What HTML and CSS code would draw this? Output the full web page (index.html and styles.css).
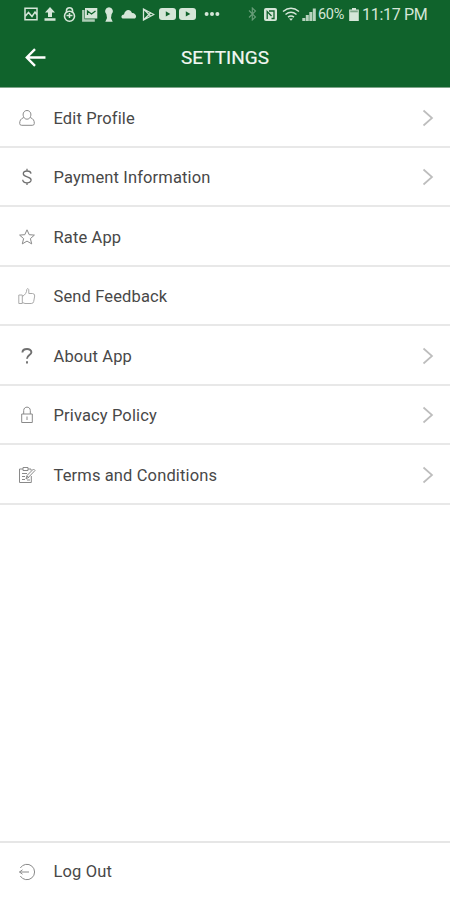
FILE: index.html
```html
<!DOCTYPE html>
<html lang="en">
<head>
<meta charset="utf-8">
<title>Settings</title>
<link rel="stylesheet" href="styles.css">
</head>
<body>
<div class="screen">
  <header class="top">
    <div class="status">
      <svg class="s-image" width="14" height="14" viewBox="0 0 14 14"><path d="M1 1.200h12v11.600H1zM1 9.500l3.500-4 3.500 4 3-4.500 2 3" fill="none" stroke="currentColor" stroke-width="1.500"/></svg>
      <svg class="s-upload" width="12" height="14" viewBox="0 0 12 14"><path d="M6 0l5 5.500H8V10H4V5.500H1zM.5 11.300h11v2.400H.5z" fill="currentColor"/></svg>
      <svg class="s-lock" width="13" height="15" viewBox="0 0 13 15"><g fill="none" stroke="currentColor" stroke-width="1.600"><path d="M3.500 6V3.500a3 2.700 0 0 1 6 0V6"/><circle cx="6.500" cy="9.200" r="5"/></g><path d="M3.500 8.500h6M6.500 6v5" stroke="currentColor" stroke-width="1.500"/></svg>
      <svg class="s-stack" width="17" height="15" viewBox="0 0 17 15"><path d="M4 1h12.300v10.500H4z" fill="currentColor"/><path d="M2.300 3v10.500h11.500" fill="none" stroke="currentColor" stroke-width="2.400" opacity=".8"/><path d="M6.500 8V4l4 3 4-3" fill="none" stroke="#10632c" stroke-width="1.300"/></svg>
      <svg class="s-key" width="10" height="15" viewBox="0 0 10 15"><path d="M5 .3a4 4 0 0 1 2.600 7L7 11l1.700 3.700H1.300L3 11l-.6-3.700A4 4 0 0 1 5 .3z" fill="currentColor"/></svg>
      <svg class="s-cloud" width="16" height="10" viewBox="0 0 16 10"><path d="M2.500 9.500C-.5 9.500-.2 5.500 3 5.500 4 0 9.500-.5 11 4c3.500-.3 5.500 4 3 5.500z" fill="currentColor"/></svg>
      <svg class="s-play" width="13" height="13" viewBox="0 0 13 13"><path d="M1.500 1l10.300 5.500-10.300 5.500zM2 1.500l7 7M2 11.500l7-7" fill="none" stroke="currentColor" stroke-width="1.300"/></svg>
      <svg class="s-tube" width="17" height="12" viewBox="0 0 17 12"><rect width="17" height="12" rx="3" fill="currentColor"/><path d="M6.800 3.300v5.200l4.500-2.600z" fill="#10632c"/></svg>
      <svg class="s-tube2" width="17" height="12" viewBox="0 0 17 12"><rect width="17" height="12" rx="3" fill="currentColor"/><path d="M6.800 3.300v5.200l4.500-2.600z" fill="#10632c"/></svg>
      <svg class="s-dots" width="16" height="5" viewBox="0 0 16 5"><g fill="currentColor"><circle cx="2.600" cy="2" r="2"/><circle cx="8" cy="2" r="2"/><circle cx="13.400" cy="2" r="2"/></g></svg>
      <svg class="s-bt" width="9" height="14" viewBox="0 0 9 14"><path d="M1 3.500l6.500 6.500L4.300 13V1l3.200 3L1 10.500" fill="none" stroke="currentColor" stroke-width="1.100"/></svg>
      <svg class="s-nfc" width="13" height="13" viewBox="0 0 13 13"><rect width="13" height="13" rx="2" fill="currentColor"/><path d="M3.200 11V3.500L7.500 8M5 3h5v7.500H7.500" fill="none" stroke="#10632c" stroke-width="1.300"/></svg>
      <svg class="s-wifi" width="18" height="14" viewBox="0 0 18 14"><g fill="none" stroke="currentColor" stroke-width="1.500"><path d="M1 4.500q8-6.500 16 0M3.500 7.500q5.500-4.500 11 0M6 10.200q3-2.400 6 0"/></g><path d="M7 11.500h4L9 13.800z" fill="currentColor"/></svg>
      <svg class="s-signal" width="14" height="13" viewBox="0 0 14 13"><path d="M.3 10h3v3h-3zM3.800 7h3v6h-3zM7.300 4h3v9h-3zM10.800 .5h3V13h-3z" fill="currentColor" opacity=".85"/></svg>
      <span class="percent">60%</span>
      <svg class="s-batt" width="10" height="13" viewBox="0 0 10 13"><path d="M3 0h4v1.500h2.800V13H.2V1.500H3z" fill="currentColor"/><path d="M1.200 2.500h7.600v1.800H1.200z" fill="#7ca587"/></svg>
      <span class="time">11:17 PM</span>
    </div>
    <div class="bar">
      <svg class="back" width="21" height="19" viewBox="0 0 22 20"><path d="M21.500 10H2.500M10.500 1.200L1.800 10l8.700 8.800" fill="none" stroke="#fff" stroke-width="2.500"/></svg>
      <h1>SETTINGS</h1>
    </div>
  </header>
  <nav class="list">
    <a class="row"><svg class="icon" viewBox="0 0 18 18"><path d="M6 8.500C4 5.500 5.500 1.500 9 1.500s5 4 3 7c-1 2.200-5 2.200-6 0zM5.700 8.500C2.500 10 1.700 11.500 1.700 14.500q0 1.800 2 1.800h10.600q2 0 2-1.800c0-3-.8-4.500-4-6"/></svg><span class="label">Edit Profile</span><svg class="chev" viewBox="0 0 12 18"><path d="M1.500 1.500L10 9l-8.500 7.500"/></svg></a>
    <a class="row"><svg class="icon dark" viewBox="0 0 18 18"><path d="M13 5.700C12.500 2 5.300 2.200 5.300 5.800c0 3.900 7.800 2.300 7.800 6.200 0 3.800-8.200 3.700-8.400-.3M9 .8v2.400M9 14.500v2.600"/></svg><span class="label">Payment Information</span><svg class="chev" viewBox="0 0 12 18"><path d="M1.500 1.500L10 9l-8.500 7.500"/></svg></a>
    <a class="row"><svg class="icon" viewBox="0 0 18 18"><path d="M9 1.800l2.200 4.900 5.200.4-4 3.500 1.300 5.300L9 13.100l-4.700 2.800 1.300-5.300-4-3.500 5.200-.4z"/></svg><span class="label">Rate App</span></a>
    <a class="row"><svg class="icon pale" viewBox="0 0 18 18"><path d="M.8 8h3.500v8.500H.8zM4.300 9.500C7 8 8.800 5.500 8.800 2.500q.8-2.200 2 .2V6.500H14.500q2.500.3 2.200 2.500l-1 5.500q-.4 2-2.400 2H7l-2.700-1"/></svg><span class="label">Send Feedback</span></a>
    <a class="row"><svg class="icon bold" viewBox="0 0 18 18"><path d="M4.400 5.500C4.600.9 13.600 1 13.400 5.300 13.300 8.200 9 8.100 9 11.800M9 14.300v2.200"/></svg><span class="label">About App</span><svg class="chev" viewBox="0 0 12 18"><path d="M1.500 1.500L10 9l-8.500 7.500"/></svg></a>
    <a class="row"><svg class="icon" viewBox="0 0 18 18"><path d="M3.700 8h10.600v8.500H3.700zM5.700 8V4.500c0-4.500 6.600-4.500 6.600 0V8M9 10.500v3.500"/></svg><span class="label">Privacy Policy</span><svg class="chev" viewBox="0 0 12 18"><path d="M1.500 1.500L10 9l-8.500 7.500"/></svg></a>
    <a class="row"><svg class="icon" viewBox="0 0 18 18"><path d="M5 3H1.500v13.500h11.800V10M10 3h3v1.500M5 1.500h5v3H5zM4 7.500h5M4 10.500h3M4 13.500h3M8 13l1-3.500 6.500-6.500 1.500 1.500-6.500 6.800zM9 14h3M9 10l2 2"/></svg><span class="label">Terms and Conditions</span><svg class="chev" viewBox="0 0 12 18"><path d="M1.500 1.500L10 9l-8.500 7.500"/></svg></a>
  </nav>
  <footer class="logout">
    <svg class="icon" viewBox="0 0 18 18"><path d="M2.300 5a7.700 7.700 0 1 1 0 8M11 9H1.500M4.500 6.800L1.500 9l3 2.200"/></svg><span class="label">Log Out</span>
  </footer>
</div>
</body>
</html>
```

FILE: styles.css
```css
* { box-sizing: border-box; }
body { margin: 0; background: #fff; font-family: Roboto, "Liberation Sans", sans-serif; }
.screen { width: 450px; height: 900px; display: flex; flex-direction: column; }
.top { height: 88px; background: #10632c; border-bottom: 1px solid #7fa58a; flex: none; }
.status { height: 28px; display: flex; align-items: center; padding-left: 24px; color: #d5e6d8; white-space: nowrap; }
.status svg { flex: none; display: block; }
.s-upload { margin-left: 6px; }
.s-lock { margin-left: 7px; }
.s-stack { margin-left: 5px; }
.s-key { margin-left: 6px; }
.s-cloud { margin-left: 7px; }
.s-play { margin-left: 5px; }
.s-tube { margin-left: 4px; }
.s-tube2 { margin-left: 3px; }
.s-dots { margin-left: 8px; }
.s-bt { margin-left: 28px; opacity: .45; }
.s-nfc { margin-left: 7px; }
.s-wifi { margin-left: 5px; }
.s-signal { margin-left: 2px; }
.percent { width: 27px; margin-left: 2px; font-size: 14.5px; letter-spacing: -.3px; }
.s-batt { margin-left: 4px; }
.time { margin-left: 3px; font-size: 16px; letter-spacing: -.3px; }
.bar { height: 59px; display: grid; grid-template-columns: 60px 1fr 60px; align-items: center; padding-bottom: 1px; }
.back { margin-left: 25px; }
h1 { margin: 0; padding-top: 2px; text-align: center; font-size: 19px; line-height: 24px; font-weight: 400; letter-spacing: 0; color: #f2f7f2; -webkit-text-stroke: .2px #f2f7f2; }
.list { display: flex; flex-direction: column; }
.row { height: 59.500px; display: flex; align-items: center; padding: 2px 16px 0 18px; border-bottom: 2px solid #e8e8e8; }
.icon { width: 18px; height: 18px; flex: none; fill: none; stroke: #8a8a8a; stroke-width: 1; }
.icon.dark { stroke: #707070; stroke-width: 1.300; }
.icon.bold { stroke: #707070; stroke-width: 1.900; }
.icon.pale { stroke: #aaa; }
.label { margin-left: 17.500px; padding-top: 1.500px; font-size: 16.500px; line-height: 22px; color: #484848; flex: 1; white-space: nowrap; letter-spacing: .13px; }
.chev { width: 12px; height: 18px; flex: none; fill: none; stroke: #bdbdbd; stroke-width: 1.700; }
.logout { margin-top: auto; height: 59px; border-top: 2px solid #e6e6e6; display: flex; align-items: center; padding: 0 18px; }
```
